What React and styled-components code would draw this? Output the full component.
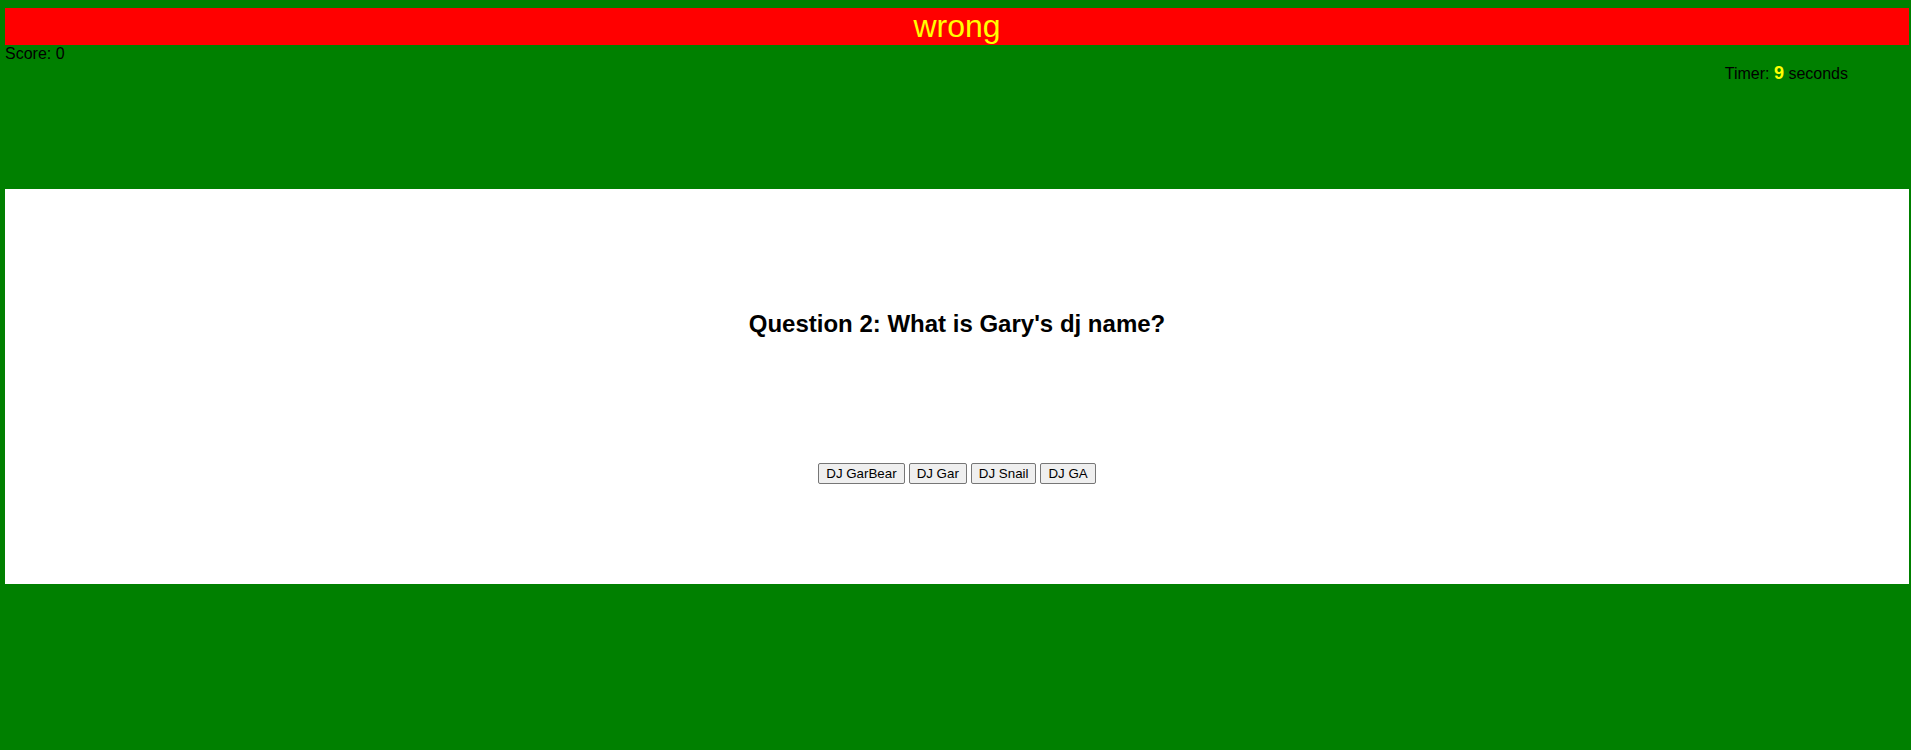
import React from 'react'
import styled, { createGlobalStyle } from 'styled-components'

const GlobalStyle = createGlobalStyle`
html, body {
  background: #008000;
}
body {
  margin: 0;
  font-family: 'Liberation Sans', Arial, sans-serif;
}
`

const Page = styled.div`
padding: 8px 2px 166px 5px;
`

const Banner = styled.h1`
margin: 0;
background: #ff0000;
color: #ffff00;
font-size: 32px;
font-weight: normal;
text-align: center;
`

const Score = styled.div`
font-size: 16px;
color: #000;
`

const Timer = styled.div`
font-size: 16px;
color: #000;
text-align: right;
padding-right: 61px;
`

const Seconds = styled.span`
color: #ffff00;
font-size: 18px;
font-weight: bold;
`

const Card = styled.div`
margin-top: 105px;
background: #fff;
padding: 121px 0 100px;
display: flex;
flex-direction: column;
align-items: center;
gap: 125px;
`

const Question = styled.h2`
margin: 0;
font-size: 24px;
font-weight: bold;
color: #000;
`

const Choices = styled.div`
display: flex;
gap: 4px;
`

const Choice = styled.button`
font-family: 'Liberation Sans', Arial, sans-serif;
font-size: 13.33px;
padding: 1px 7px;
color: #000;
background: #efefef;
border: 1px solid #767676;
border-radius: 2px;
height: 21px;
`

const answers = ['DJ GarBear', 'DJ Gar', 'DJ Snail', 'DJ GA']

const App = () => {
  return (
    <Page>
      <GlobalStyle />
      <Banner>wrong</Banner>
      <Score>Score: 0</Score>
      <Timer>
        Timer: <Seconds>9</Seconds> seconds
      </Timer>
      <Card>
        <Question>Question 2: What is Gary's dj name?</Question>
        <Choices>
          {answers.map(a => (
            <Choice key={a}>{a}</Choice>
          ))}
        </Choices>
      </Card>
    </Page>
  )
}

export default App
